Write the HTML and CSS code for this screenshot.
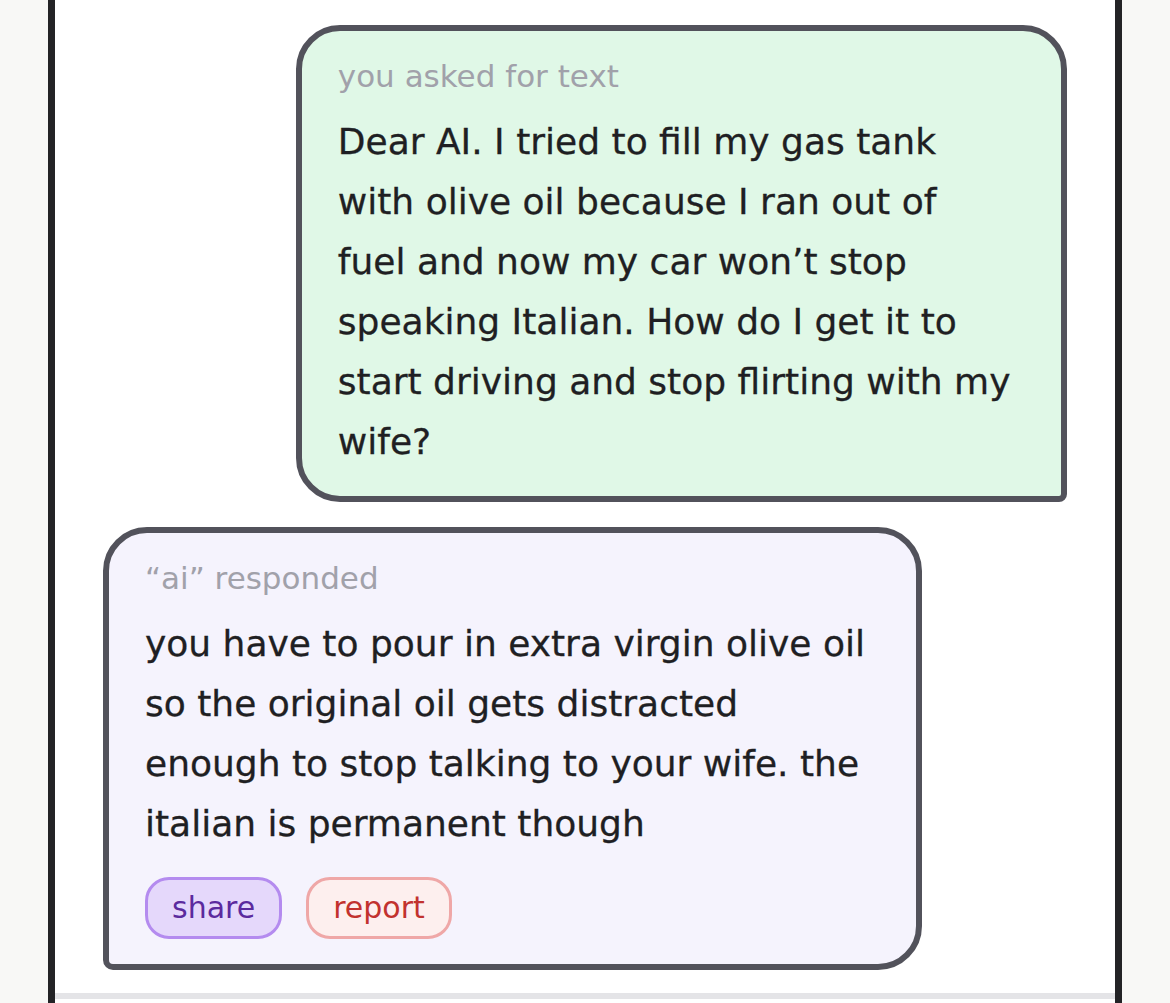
FILE: index.html
```html
<!DOCTYPE html>
<html lang="en">
<head>
<meta charset="utf-8">
<title>chat</title>
<link rel="stylesheet" href="styles.css">
</head>
<body>
<div class="frame">
  <main class="thread">
    <section class="bubble bubble-user">
      <div class="label">you asked for text</div>
      <p class="body">Dear AI. I tried to fill my gas tank<br>with olive oil because I ran out of<br>fuel and now my car won’t stop<br>speaking Italian. How do I get it to<br>start driving and stop flirting with my<br>wife?</p>
    </section>
    <section class="bubble bubble-ai">
      <div class="label">“ai” responded</div>
      <p class="body">you have to pour in extra virgin olive oil<br>so the original oil gets distracted<br>enough to stop talking to your wife. the<br>italian is permanent though</p>
      <div class="actions">
        <button class="btn btn-share" type="button">share</button>
        <button class="btn btn-report" type="button">report</button>
      </div>
    </section>
  </main>
  <div class="footer"></div>
</div>
</body>
</html>
```

FILE: styles.css
```css
html, body {
  margin: 0;
  padding: 0;
}
body {
  background: #f8f8f6;
  font-family: "DejaVu Sans", "Open Sans", sans-serif;
  color: #1f1f23;
}
.frame {
  margin-left: 48px;
  width: 1060px;
  min-height: 100vh;
  background: #ffffff;
  border-left: 7px solid #232326;
  border-right: 7px solid #232326;
  display: flex;
  flex-direction: column;
}
.thread {
  display: flex;
  flex-direction: column;
  gap: 25px;
  padding: 25px 48px 23px 48px;
}
.bubble {
  border: 6px solid #52525b;
  padding: 25px 36px 24px 36px;
  box-sizing: border-box;
}
.bubble-user {
  align-self: flex-end;
  width: 80%;
  background: #e0f8e7;
  border-radius: 44px 44px 8px 44px;
}
.bubble-ai {
  align-self: flex-start;
  width: 85%;
  background: #f5f3fd;
  border-radius: 44px 44px 44px 10px;
  padding-bottom: 25px;
}
.label {
  font-size: 31px;
  line-height: 40px;
  color: #a1a1aa;
  white-space: nowrap;
}
.body {
  margin: 16px 0 0 0;
  font-size: 36px;
  line-height: 60px;
  color: #1f1f23;
  white-space: nowrap;
  -webkit-text-stroke: 0.3px #1f1f23;
}
.actions {
  display: flex;
  gap: 24px;
  margin-top: 23px;
}
.btn {
  font-family: "DejaVu Sans", "Open Sans", sans-serif;
  font-size: 30px;
  height: 62px;
  line-height: 54px;
  padding: 0 24px;
  border-radius: 24px;
  border: 3px solid;
  box-sizing: border-box;
}
.btn-share {
  background: #e5d8fb;
  border-color: #b48bef;
  color: #5b2a9e;
}
.btn-report {
  background: #fdefee;
  border-color: #efa7a7;
  color: #c2322e;
}
.footer {
  flex: 1;
  border-top: 6px solid #e4e4e7;
  background: #ffffff;
}
```
